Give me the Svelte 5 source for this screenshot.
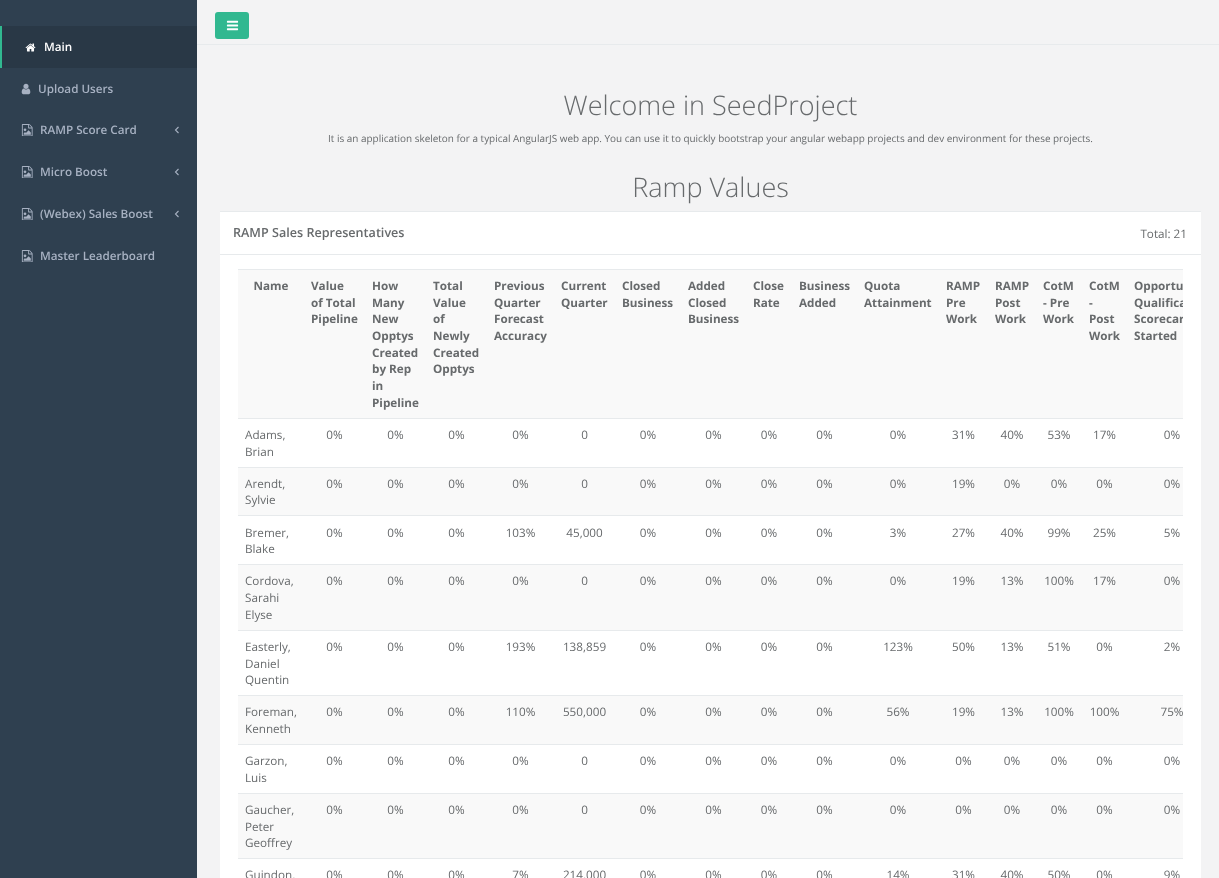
<script lang="ts">
  const nav = [
    { label: "Main", icon: "home", active: true },
    { label: "Upload Users", icon: "user" },
    { label: "RAMP Score Card", icon: "file", arrow: true },
    { label: "Micro Boost", icon: "file", arrow: true },
    { label: "(Webex) Sales Boost", icon: "file", arrow: true },
    { label: "Master Leaderboard", icon: "file" },
  ];

  const icons: Record<string, string> = {
    home: "M1472 992v480q0 26-19 45t-45 19h-384v-384h-256v384h-384q-26 0-45-19t-19-45v-480q0-1 .5-3t.5-3l575-474 575 474q1 2 1 6zm223-69l-62 74q-8 9-21 11h-3q-13 0-21-7l-692-577-692 577q-12 8-24 7-13-2-21-11l-62-74q-8-10-7-23.5t11-21.5l719-599q32-26 76-26t76 26l244 204v-195q0-14 9-23t23-9h192q14 0 23 9t9 23v408l219 182q10 8 11 21.5t-7 23.5z",
    user: "M1536 1399q0 109-62.5 187t-150.5 78h-854q-88 0-150.5-78t-62.5-187q0-85 8.5-160.5t31.5-152 58.5-131 94-89 134.5-34.5q131 128 313 128t313-128q76 0 134.5 34.5t94 89 58.5 131 31.5 152 8.5 160.5zm-256-887q0 159-112.5 271.5t-271.5 112.5-271.5-112.5-112.5-271.5 112.5-271.5 271.5-112.5 271.5 112.5 112.5 271.5z",
    file: "M1596 380q28 28 48 76t20 88v1152q0 40-28 68t-68 28h-1344q-40 0-68-28t-28-68v-1600q0-40 28-68t68-28h896q40 0 88 20t76 48zm-444-244v376h376q-10-29-22-41l-313-313q-12-12-41-22zm384 1528v-1024h-416q-40 0-68-28t-28-68v-416h-768v1536h1280zm-128-448v320h-1024v-192l192-192 128 128 384-384zm-832-192q-80 0-136-56t-56-136 56-136 136-56 136 56 56 136-56 136-136 56z",
  };

  const bars = "M1664 1344v128q0 26-19 45t-45 19h-1408q-26 0-45-19t-19-45v-128q0-26 19-45t45-19h1408q26 0 45 19t19 45zm0-512v128q0 26-19 45t-45 19h-1408q-26 0-45-19t-19-45v-128q0-26 19-45t45-19h1408q26 0 45 19t19 45zm0-512v128q0 26-19 45t-45 19h-1408q-26 0-45-19t-19-45v-128q0-26 19-45t45-19h1408q26 0 45 19t19 45z";

  const columns = [
    "Name", "Value of Total Pipeline", "How Many New Opptys Created by Rep in Pipeline",
    "Total Value of Newly Created Opptys", "Previous Quarter Forecast Accuracy", "Current Quarter",
    "Closed Business", "Added Closed Business", "Close Rate", "Business Added", "Quota Attainment",
    "RAMP Pre Work", "RAMP Post Work", "CotM - Pre Work", "CotM - Post Work",
    "Opportunity Qualification Scorecard Started",
  ];

  const widths = [66, 61, 61, 61, 67, 61, 66, 65, 46, 65, 82, 49, 48, 46, 45, 90];

  // only these columns differ between reps, everything else reads 0%
  const reps = [
    ["Adams, Brian", "0%", "0", "0%", "31%", "40%", "53%", "17%", "0%"],
    ["Arendt, Sylvie", "0%", "0", "0%", "19%", "0%", "0%", "0%", "0%"],
    ["Bremer, Blake", "103%", "45,000", "3%", "27%", "40%", "99%", "25%", "5%"],
    ["Cordova, Sarahi Elyse", "0%", "0", "0%", "19%", "13%", "100%", "17%", "0%"],
    ["Easterly, Daniel Quentin", "193%", "138,859", "123%", "50%", "13%", "51%", "0%", "2%"],
    ["Foreman, Kenneth", "110%", "550,000", "56%", "19%", "13%", "100%", "100%", "75%"],
    ["Garzon, Luis", "0%", "0", "0%", "0%", "0%", "0%", "0%", "0%"],
    ["Gaucher, Peter Geoffrey", "0%", "0", "0%", "0%", "0%", "0%", "0%", "0%"],
    ["Guindon, Rene", "7%", "214,000", "14%", "31%", "40%", "50%", "0%", "9%"],
  ];

  const rows = reps.map(([name, prev, cur, quota, ...rest]) => ({
    name,
    cells: ["0%", "0%", "0%", prev, cur, "0%", "0%", "0%", "0%", quota, ...rest],
  }));
</script>

<div class="wrapper">
  <nav class="sidebar">
    <ul>
      {#each nav as item}
        <li class:active={item.active} class="icon-{item.icon}">
          <svg class="nav-icon" viewBox="0 0 1792 1792" aria-hidden="true">
            <path d={icons[item.icon]} fill="currentColor" />
          </svg>
          <span class="nav-label">{item.label}</span>
          {#if item.arrow}
            <svg class="arrow" viewBox="0 0 8 12" aria-hidden="true">
              <path d="M5.5 3 2.5 6 5.5 9" fill="none" stroke="currentColor" stroke-width="1.1" />
            </svg>
          {/if}
        </li>
      {/each}
    </ul>
  </nav>

  <main class="page">
    <header class="topbar">
      <button class="minimalize" type="button" aria-label="Toggle menu">
        <svg viewBox="0 0 1792 1792" width="13" height="13" aria-hidden="true">
          <path d={bars} fill="currentColor" />
        </svg>
      </button>
    </header>

    <div class="content">
      <div class="welcome">
        <h1>Welcome in SeedProject</h1>
        <small>It is an application skeleton for a typical AngularJS web app. You can use it to quickly bootstrap your angular webapp projects and dev environment for these projects.</small>
      </div>
      <h2>Ramp Values</h2>

      <section class="ibox">
        <div class="ibox-title">
          <h5>RAMP Sales Representatives</h5>
          <span class="total">Total: 21</span>
        </div>
        <div class="ibox-content">
          <div class="table-wrap">
            <table>
              <colgroup>
                {#each widths as w}
                  <col style:width="{w}px" />
                {/each}
              </colgroup>
              <thead>
                <tr>
                  {#each columns as col}
                    <th>{col}</th>
                  {/each}
                </tr>
              </thead>
              <tbody>
                {#each rows as row}
                  <tr>
                    <td class="name">{row.name}</td>
                    {#each row.cells as cell}
                      <td>{cell}</td>
                    {/each}
                  </tr>
                {/each}
              </tbody>
            </table>
          </div>
        </div>
      </section>
    </div>
  </main>
</div>

<style>
  :global(body) {
    margin: 0;
    font-family: "Open Sans", "Liberation Sans", sans-serif;
    font-size: 11.7px;
    color: #676a6c;
    background: #f3f3f4;
    text-rendering: geometricPrecision;
  }

  .wrapper {
    display: flex;
    height: 100vh;
    overflow: hidden;
    will-change: transform;
  }

  .sidebar {
    width: 197px;
    flex: none;
    background: #2f4050;
    padding-top: 26px;
  }
  .sidebar ul {
    list-style: none;
    margin: 0;
    padding: 0;
  }
  .sidebar li {
    display: flex;
    align-items: center;
    height: 42px;
    padding-left: 21px;
    font-size: 11.7px;
    font-weight: 600;
    color: #a7b1c2;
    box-sizing: border-box;
  }
  .sidebar li.active {
    background: #293846;
    border-left: 2px solid #31b890;
    padding-left: 23px;
    color: #fff;
  }
  .nav-icon {
    width: 12px;
    height: 12px;
    flex: none;
    margin-right: 7px;
  }
  .icon-home .nav-icon {
    width: 11px;
    height: 11px;
    margin-right: 8px;
  }
  .icon-user .nav-icon {
    margin-left: -1px;
    margin-right: 6px;
  }
  .sidebar li.icon-file {
    padding-left: 20.5px;
    padding-bottom: 2px;
  }
  .icon-file .nav-icon {
    width: 12.5px;
    height: 12.5px;
  }
  .nav-label {
    flex: 1;
  }
  .arrow {
    width: 8px;
    height: 12px;
    margin-right: 16px;
  }

  .page {
    flex: 1;
    min-width: 0;
  }
  .topbar {
    height: 45px;
    box-sizing: border-box;
    border-bottom: 1px solid #e7eaec;
    padding: 12px 18px;
  }
  .minimalize {
    display: flex;
    align-items: center;
    justify-content: center;
    width: 34px;
    height: 27px;
    padding: 0;
    border: none;
    border-radius: 3px;
    background: #31b890;
    color: #fff;
  }

  .content {
    padding: 0 18px 0 23px;
  }
  .welcome {
    padding-top: 42px;
    text-align: center;
  }
  h1 {
    margin: 0;
    font-size: 27px;
    font-weight: 300;
    line-height: 36px;
  }
  small {
    display: block;
    margin-top: 7px;
    font-size: 9.945px;
    line-height: 16px;
  }
  h2 {
    margin: 25px 0 0;
    text-align: center;
    font-size: 27px;
    font-weight: 300;
    line-height: 32px;
  }

  .ibox {
    margin-top: 8px;
    background: #fff;
    border-top: 1px solid #e7eaec;
  }
  .ibox-title {
    display: flex;
    justify-content: space-between;
    height: 43px;
    box-sizing: border-box;
    padding: 0 14px 0 13px;
    border-bottom: 1px solid #e7eaec;
  }
  h5 {
    margin: 12px 0 0;
    font-size: 12.6px;
    font-weight: 600;
    line-height: 17px;
  }
  .total {
    margin-top: 14px;
    line-height: 17px;
  }
  .ibox-content {
    padding: 14px 18px 15px;
  }
  .table-wrap {
    overflow: hidden;
  }

  table {
    width: 979px;
    table-layout: fixed;
    border-collapse: collapse;
    font-size: 11.7px;
    line-height: 16.7px;
  }
  th {
    padding: 7.9px 7px 6.3px;
    text-align: left;
    vertical-align: top;
    font-weight: 700;
    background: #f9f9f9;
    border-top: 1px solid #e7eaec;
    border-bottom: 1px solid #e7eaec;
  }
  th:first-child {
    text-align: center;
  }
  td {
    padding: 8.2px 7px 6.2px;
    text-align: center;
    vertical-align: top;
    border-bottom: 1px solid #e7eaec;
  }
  td.name {
    text-align: left;
  }
  tbody tr:nth-child(even) {
    background: #f9f9f9;
  }
</style>
